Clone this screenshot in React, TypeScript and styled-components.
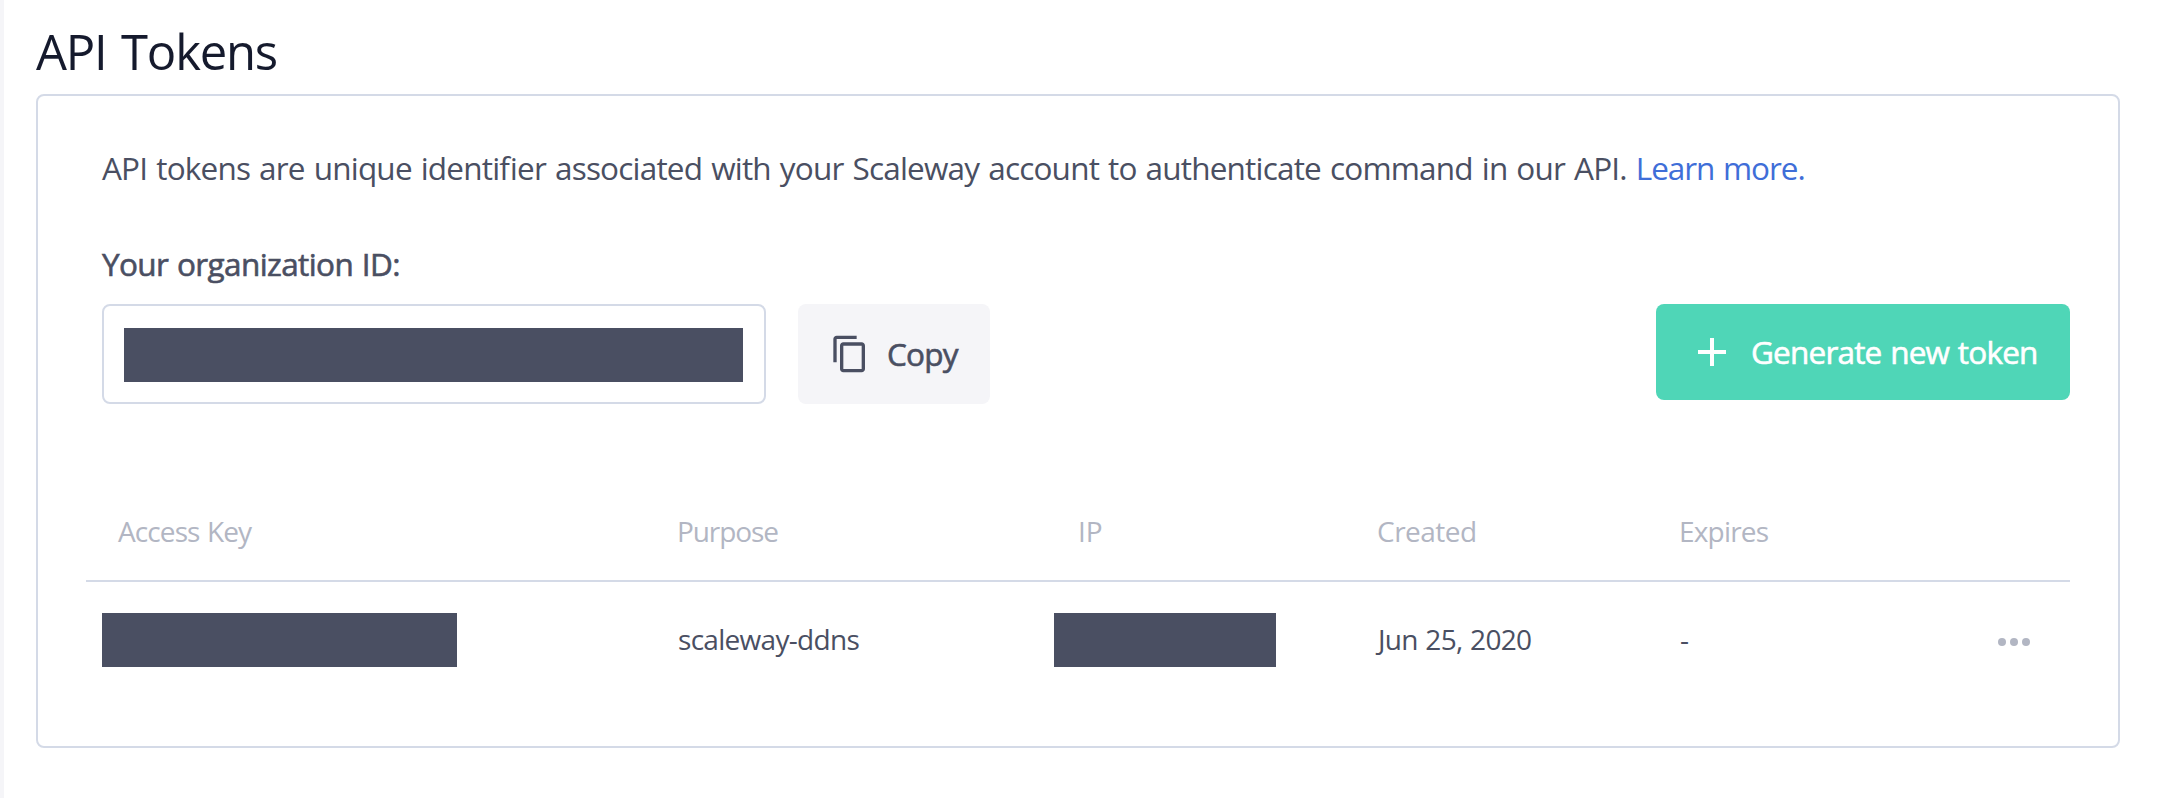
import React from "react";
import styled, { createGlobalStyle } from "styled-components";

const color = {
  ink: "#151a2d",
  text: "#4a4f62",
  muted: "#b2b6c3",
  line: "#d4dae7",
  soft: "#f5f5f8",
  link: "#3f6ed8",
  primary: "#4fd6b7",
};

const GlobalStyle = createGlobalStyle`
  * { box-sizing: border-box; }
  body {
    margin: 0;
    background: #ffffff;
    color: ${color.text};
    font-family: "Open Sans", "Noto Sans", sans-serif;
    font-feature-settings: "liga" 1;
  }
`;

const Page = styled.main`
  height: 798px;
  border-left: 4px solid ${color.soft};
  padding: 21px 44px 0 32px;
`;

const Title = styled.h1`
  margin: 0 0 13px;
  color: ${color.ink};
  font-size: 49px;
  font-weight: 400;
  line-height: 60px;
  letter-spacing: -1.2px;
  word-spacing: 3px;
`;

const Card = styled.section`
  height: 654px;
  border: 2px solid ${color.line};
  border-radius: 8px;
  padding: 52px 48px 48px;
`;

const Intro = styled.p`
  margin: 0 0 0 16px;
  font-size: 31.5px;
  line-height: 40px;
  letter-spacing: -0.8px;
  word-spacing: 1.56px;
  white-space: nowrap;
`;

const Link = styled.a`
  color: ${color.link};
  letter-spacing: -1.05px;
  text-decoration: none;
`;

const Label = styled.label`
  display: block;
  margin: 56px 0 20px 16px;
  font-size: 31.5px;
  line-height: 40px;
  letter-spacing: -0.6px;
  word-spacing: 1px;
  -webkit-text-stroke: 0.6px currentColor;
`;

const Controls = styled.div`
  display: flex;
  align-items: flex-start;
  height: 100px;
  margin-left: 16px;
`;

const Field = styled.div`
  display: flex;
  align-items: center;
  width: 664px;
  height: 100px;
  margin-right: 32px;
  padding: 2px 20px 0;
  border: 2px solid ${color.line};
  border-radius: 8px;
`;

const Redacted = styled.span<{ $width: number; $shift?: number }>`
  display: block;
  width: ${(p) => p.$width}px;
  height: 54px;
  margin-left: -${(p) => p.$shift ?? 0}px;
  background: ${color.text};
`;

const Button = styled.button<{ $primary?: boolean }>`
  display: flex;
  align-items: center;
  gap: ${(p) => (p.$primary ? 15 : 17)}px;
  width: ${(p) => (p.$primary ? 414 : 192)}px;
  height: ${(p) => (p.$primary ? 96 : 100)}px;
  margin: 0 0 0 ${(p) => (p.$primary ? "auto" : "0")};
  padding: 0 0 0 32px;
  border: 0;
  border-radius: 8px;
  background: ${(p) => (p.$primary ? color.primary : color.soft)};
  color: ${(p) => (p.$primary ? "#ffffff" : color.text)};
  font: inherit;
  font-size: 31.5px;
  line-height: 40px;
  letter-spacing: -0.8px;
  word-spacing: 1.3px;
  white-space: nowrap;
  -webkit-text-stroke: 0.6px currentColor;
`;

const Icon = styled.svg<{ $size: number }>`
  flex: none;
  width: ${(p) => p.$size}px;
  height: ${(p) => p.$size}px;
  fill: currentColor;
  -webkit-text-stroke: 0;
`;

const Table = styled.div`
  margin-top: 78px;
`;

const Row = styled.div`
  display: grid;
  grid-template-columns: 559px 401px 299px 302px 1fr 80px;
  align-items: center;
  height: 116px;
  padding-left: 32px;
  font-size: 28px;
  line-height: 36px;
  letter-spacing: -0.7px;
  word-spacing: 1px;
`;

const HeadRow = styled(Row)`
  height: 100px;
  border-bottom: 2px solid ${color.line};
  color: ${color.muted};
`;

const HeadCell = styled.span<{ $tracking: number }>`
  letter-spacing: ${(p) => p.$tracking}px;
`;

const Cell = styled.span`
  padding: 0 0 2px 1px;
`;

const MoreButton = styled.button`
  display: flex;
  padding: 4px 0 0;
  border: 0;
  background: none;
  color: ${color.muted};
`;

const columns: { name: string; tracking: number }[] = [
  { name: "Access Key", tracking: -0.9 },
  { name: "Purpose", tracking: -1.1 },
  { name: "IP", tracking: 0 },
  { name: "Created", tracking: -0.5 },
  { name: "Expires", tracking: -0.8 },
];

export default function App() {
  return (
    <>
      <GlobalStyle />
      <Page>
        <Title>API Tokens</Title>
        <Card>
          <Intro>
            API tokens are unique identifier associated with your Scaleway account to authenticate
            command in our API. <Link>Learn more.</Link>
          </Intro>
          <Label>Your organization ID:</Label>
          <Controls>
            <Field>
              <Redacted $width={619} />
            </Field>
            <Button>
              <Icon $size={40} viewBox="0 0 24 24">
                <path d="M16 1H4c-1.1 0-2 .9-2 2v14h2V3h12V1zm3 4H8c-1.1 0-2 .9-2 2v14c0 1.1.9 2 2 2h11c1.1 0 2-.9 2-2V7c0-1.1-.9-2-2-2zm0 16H8V7h11v14z" />
              </Icon>
              Copy
            </Button>
            <Button $primary>
              <Icon $size={48} viewBox="0 0 24 24">
                <path d="M19 13h-6v6h-2v-6H5v-2h6V5h2v6h6v2z" />
              </Icon>
              Generate new token
            </Button>
          </Controls>
          <Table>
            <HeadRow>
              {columns.map((c) => (
                <HeadCell key={c.name} $tracking={c.tracking}>
                  {c.name}
                </HeadCell>
              ))}
            </HeadRow>
            <Row>
              <Redacted $width={355} $shift={16} />
              <Cell>scaleway-ddns</Cell>
              <Redacted $width={222} $shift={24} />
              <Cell>Jun 25, 2020</Cell>
              <Cell>-</Cell>
              <MoreButton aria-label="More actions">
                <Icon $size={48} viewBox="0 0 24 24">
                  <circle cx="6" cy="12" r="2" />
                  <circle cx="12" cy="12" r="2" />
                  <circle cx="18" cy="12" r="2" />
                </Icon>
              </MoreButton>
            </Row>
          </Table>
        </Card>
      </Page>
    </>
  );
}
